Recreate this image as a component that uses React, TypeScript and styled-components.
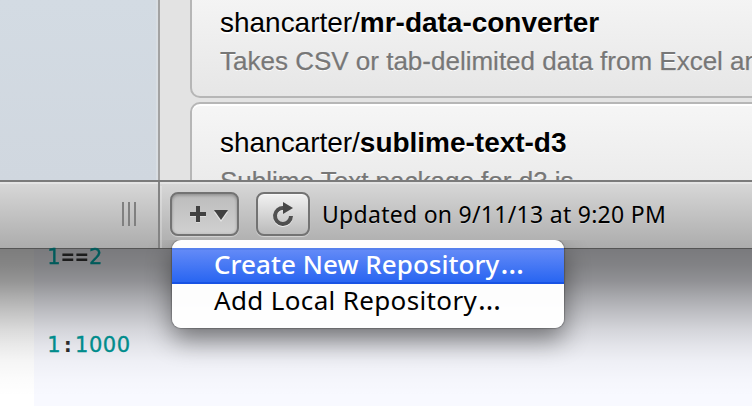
import React from "react";
import styled, { createGlobalStyle } from "styled-components";

const GlobalStyle = createGlobalStyle`
  * { box-sizing: border-box; }
  html, body { margin: 0; padding: 0; }
  body { background: #fff; overflow: hidden; }
`;

const Desktop = styled.div`
  position: relative;
  display: flex;
  flex-direction: column;
  width: 752px;
  height: 406px;
  overflow: hidden;
  font-family: "Noto Sans", "Open Sans", sans-serif;
`;

const AppWindow = styled.section`
  display: flex;
  flex-direction: column;
  flex: none;
  height: 249px;
`;

const Body = styled.div`
  display: flex;
  height: 180px;
  overflow: hidden;
  background: #e3e3e3;
`;

const Sidebar = styled.aside`
  flex: none;
  width: 160px;
  border-right: 2px solid #a2a2a2;
  background: linear-gradient(#d3dbe3, #d0d7df);
  box-shadow: inset -2px 0 #d9dee3;
`;

const RepoList = styled.div`
  display: flex;
  flex-direction: column;
  gap: 4px;
  width: 620px;
  flex: none;
  padding-left: 30px;
  margin-top: -18px;
`;

const Card = styled.article`
  flex: none;
  height: 116px;
  padding: 21px 0 0 28px;
  border: 2px solid #b6b6b6;
  border-radius: 10px;
  background: linear-gradient(#f6f6f6, #e6e6e6);
  box-shadow: inset 0 2px #fff;
  font-family: "Liberation Sans", Arial, sans-serif;
  white-space: nowrap;
`;

const RepoName = styled.div`
  height: 39px;
  font-size: 28px;
  line-height: 36px;
  letter-spacing: -0.02px;
  color: #000;
  text-shadow: 0 2px #fff;
`;

const RepoSummary = styled.div`
  font-size: 26px;
  line-height: 34px;
  color: #777;
  text-shadow: 0 1px #fff;
  -webkit-text-stroke: 0.25px #777;
`;

const Toolbar = styled.footer`
  display: flex;
  height: 69px;
  border-top: 2px solid #7b7b7b;
  border-bottom: 1px solid #555;
  background: linear-gradient(#d8d8d8, #acacac);
  box-shadow: inset 0 2px #e4e4e4;
`;

const GripArea = styled.div`
  display: flex;
  justify-content: flex-end;
  width: 160px;
  padding: 20px 22px 0 0;
  border-right: 2px solid #848484;
`;

const Grip = styled.div`
  display: flex;
  gap: 4px;
  height: 24px;
`;

const GripBar = styled.i`
  width: 2px;
  background: #808080;
`;

const Actions = styled.div`
  display: flex;
  flex: 1;
  margin-top: 4px;
  padding: 6px 0 0 8px;
  border-left: 2px solid rgba(255, 255, 255, 0.24);
`;

const ToolButton = styled.button<{ $width: number; $pressed?: boolean }>`
  display: block;
  width: ${(p) => p.$width}px;
  height: 44px;
  margin: 0 17px 0 0;
  padding: 0;
  border: 2px solid #737373;
  border-radius: 8px;
  background: ${(p) => (p.$pressed ? "linear-gradient(#bcbcbc, #d0d0d0)" : "linear-gradient(#f2f2f2, #bababa)")};
  box-shadow: ${(p) =>
    p.$pressed
      ? "inset 0 2px 3px rgba(0,0,0,.16), inset 0 0 3px rgba(0,0,0,.14), 0 1px 1px rgba(255,255,255,.45)"
      : "inset 0 1px rgba(255,255,255,.5), 0 1px 1px rgba(255,255,255,.45)"};
  svg { display: block; }
`;

const Status = styled.div`
  margin-left: -5px;
  font-size: 23px;
  line-height: 44px;
  letter-spacing: 0.28px;
  color: #000;
  white-space: nowrap;
  text-shadow: 0 1px rgba(255, 255, 255, 0.3);
`;

const Editor = styled.main`
  display: grid;
  grid-template-columns: 34px 1fr;
  height: 157px;
  background: linear-gradient(
    rgba(0,0,0,.51) 0, rgba(0,0,0,.48) 16px, rgba(0,0,0,.42) 32px,
    rgba(0,0,0,.32) 48px, rgba(0,0,0,.23) 64px, rgba(0,0,0,.15) 80px,
    rgba(0,0,0,.085) 96px, rgba(0,0,0,.04) 112px, rgba(0,0,0,.01) 132px, transparent 148px
  ), linear-gradient(90deg, #fff 34px, #f8f9ff 34px);
`;

const Code = styled.div`
  grid-column: 2;
  padding: 0 0 0 13px;
  font-family: "DejaVu Sans", sans-serif;
  font-size: 21px;
`;

const CodeLine = styled.div<{ $shaded?: boolean }>`
  display: flex;
  height: 88px;
  line-height: 16px;
  filter: ${(p) => (p.$shaded ? "brightness(0.65)" : "none")};
`;

const Digit = styled.span`
  display: flex;
  justify-content: center;
  width: 13.9px;
  color: #008c8c;
  -webkit-text-stroke: 0.35px #008c8c;
`;

const Operator = styled.span`
  display: flex;
  justify-content: center;
  width: 13.9px;
  color: #2b2b2b;
  font-family: "DejaVu Sans Mono", monospace;
  font-weight: 700;
`;

const Menu = styled.div`
  position: absolute;
  left: 172px;
  top: 240px;
  width: 392px;
  height: 88px;
  padding: 8px 0;
  border-radius: 9px;
  background: rgba(255, 255, 255, 0.975);
  box-shadow: 0 0 1px 1px rgba(0,0,0,.22), 0 12px 26px rgba(0,0,0,.45);
  clip-path: inset(0 -80px -100px -80px round 9px 9px 0 0);
`;

const MenuItem = styled.div<{ $selected?: boolean }>`
  height: 36px;
  padding-left: 42px;
  font-size: 26px;
  line-height: 32px;
  letter-spacing: ${(p) => (p.$selected ? "0.05px" : "0.35px")};
  font-weight: ${(p) => (p.$selected ? 500 : 400)};
  white-space: nowrap;
  color: ${(p) => (p.$selected ? "#fff" : "#000")};
  background: ${(p) => (p.$selected ? "linear-gradient(#668cf7, #2563f1)" : "transparent")};
  box-shadow: ${(p) => (p.$selected ? "inset 0 2px #5680ed, inset 0 -2px #1853e4" : "none")};
`;

const Ellipsis = styled.span`
  padding-left: 1px;
  font-size: 29px;
  line-height: 1;
`;

const PlusIcon = () => (
  <svg width="65" height="40" viewBox="172 194 65 40">
    <path d="M196 207h4v6h6v4h-6v6h-4v-6h-6v-4h6z" fill="#ddd" />
    <path d="M196 206h4v6h6v4h-6v6h-4v-6h-6v-4h6z" fill="#414141" />
    <path d="M214 212h14l-7 10z" fill="#e5e5e5" />
    <path d="M214 210h14l-7 10z" fill="#414141" />
  </svg>
);

const RefreshIcon = () => (
  <svg width="50" height="40" viewBox="258 194 50 40">
    <path d="M284 209a8 8 0 1 0 7 8" fill="none" stroke="#eee" strokeWidth="4" />
    <path d="M284 208a8 8 0 1 0 7 8" fill="none" stroke="#505050" strokeWidth="4" />
    <path d="M283 202l10 6-10 6z" fill="#464646" />
  </svg>
);

function SourceLine({ text, shaded }: { text: string; shaded?: boolean }) {
  return (
    <CodeLine $shaded={shaded}>
      {text.split("").map((char, index) =>
        /\d/.test(char) ? <Digit key={index}>{char}</Digit> : <Operator key={index}>{char}</Operator>
      )}
    </CodeLine>
  );
}

function Repo({ name, summary }: { name: string; summary: string }) {
  return (
    <Card>
      <RepoName>shancarter/<b>{name}</b></RepoName>
      <RepoSummary>{summary}</RepoSummary>
    </Card>
  );
}

export default function App() {
  return (
    <>
      <GlobalStyle />
      <Desktop>
        <AppWindow>
          <Body>
            <Sidebar />
            <RepoList>
              <Repo name="mr-data-converter" summary="Takes CSV or tab-delimited data from Excel and" />
              <Repo name="sublime-text-d3" summary="Sublime Text package for d3.js" />
            </RepoList>
          </Body>
          <Toolbar>
            <GripArea><Grip><GripBar /><GripBar /><GripBar /></Grip></GripArea>
            <Actions>
              <ToolButton $width={69} $pressed aria-label="Add repository"><PlusIcon /></ToolButton>
              <ToolButton $width={54} aria-label="Refresh"><RefreshIcon /></ToolButton>
              <Status>Updated on 9/11/13 at 9:20 PM</Status>
            </Actions>
          </Toolbar>
        </AppWindow>
        <Editor>
          <Code>
            <SourceLine text="1==2" shaded />
            <SourceLine text="1:1000" />
          </Code>
        </Editor>
        <Menu>
          <MenuItem $selected>Create New Repository<Ellipsis>…</Ellipsis></MenuItem>
          <MenuItem>Add Local Repository<Ellipsis>…</Ellipsis></MenuItem>
        </Menu>
      </Desktop>
    </>
  );
}
